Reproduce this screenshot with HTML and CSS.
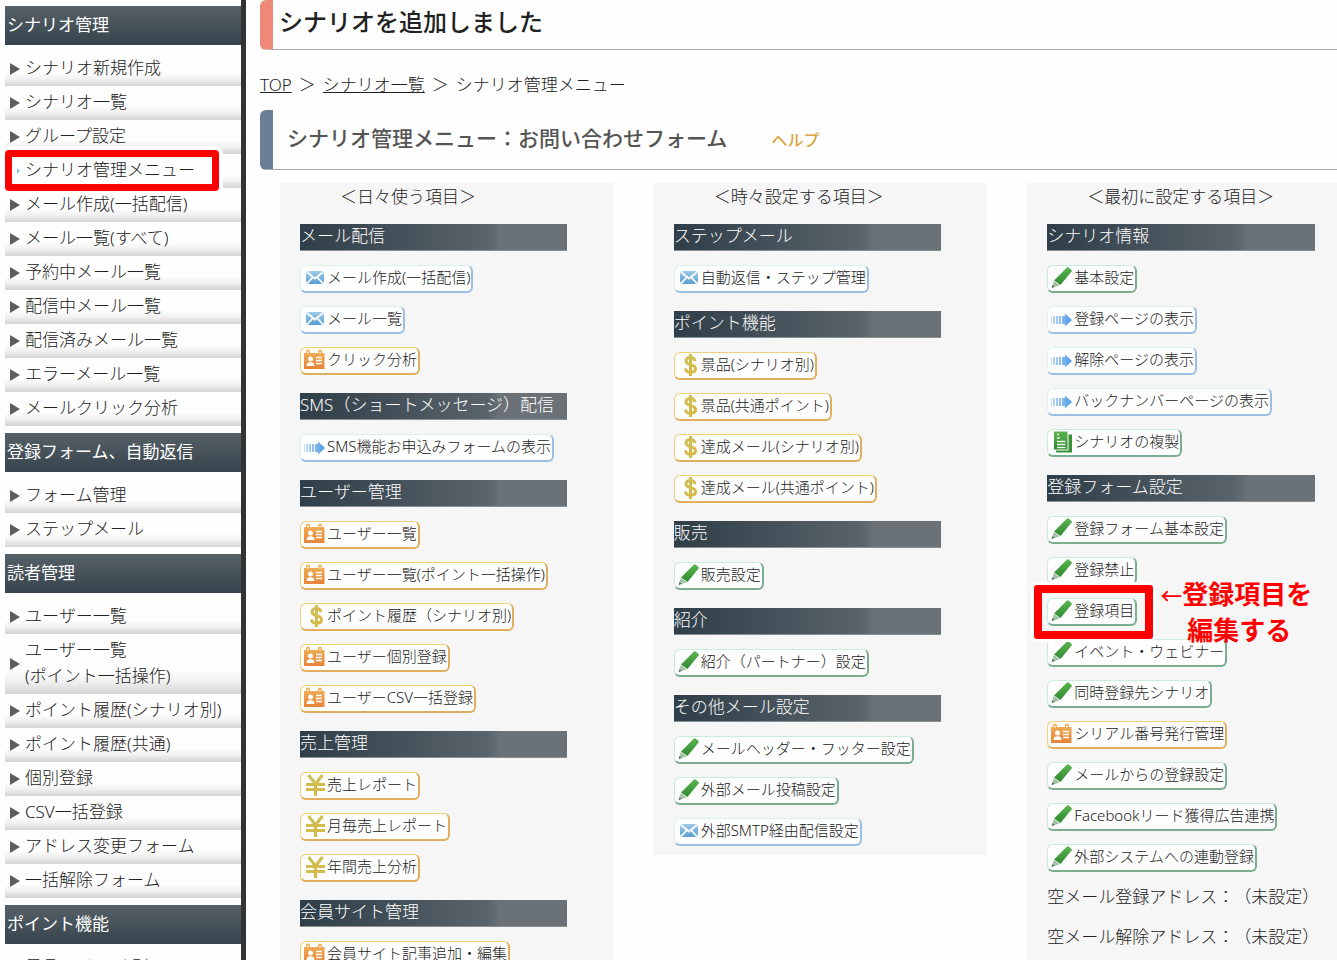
FILE: index.html
```html
<!DOCTYPE html>
<html lang="ja">
<head>
<meta charset="utf-8">
<title>シナリオ管理メニュー</title>
<link rel="stylesheet" href="styles.css">
</head>
<body>
<svg class="defs" width="0" height="0" aria-hidden="true">
  <defs>
    <linearGradient id="g-blue" x1="0" y1="0" x2="0" y2="1"><stop offset="0" stop-color="#9ccbe8"/><stop offset="1" stop-color="#5a9fd2"/></linearGradient>
    <linearGradient id="g-orange" x1="0" y1="0" x2="0" y2="1"><stop offset="0" stop-color="#efb458"/><stop offset="1" stop-color="#e8833a"/></linearGradient>
    <linearGradient id="g-green" x1="0" y1="0" x2="0" y2="1"><stop offset="0" stop-color="#5cb551"/><stop offset="1" stop-color="#2f8a30"/></linearGradient>
    <linearGradient id="g-arrow" x1="0" y1="0" x2="1" y2="0"><stop offset="0" stop-color="#c3ddf6"/><stop offset="1" stop-color="#4a98e6"/></linearGradient>
    <linearGradient id="g-gold" x1="0" y1="0" x2="1" y2="1"><stop offset="0" stop-color="#c9c25c"/><stop offset="1" stop-color="#dcb63f"/></linearGradient>
    <symbol id="mail" viewBox="0 0 22 24">
      <rect x="3" y="6" width="18" height="13" rx="4" fill="url(#g-blue)"/>
      <path d="M4.500 7.500l7.500 6 7.500-6M4.500 18l5-5.500M19.500 18l-5-5.500" fill="none" stroke="#fff" stroke-width="1.800"/>
    </symbol>
    <symbol id="card" viewBox="0 0 22 24">
      <path d="M1 6h2V4.500a2 2 0 0 1 4 0V6h8V4.500a2 2 0 0 1 4 0V6h2.500v16H1z" fill="url(#g-orange)"/>
      <path d="M4 4.500h2v2H4zM16 4.500h2v2h-2z" fill="#fbe3c0"/>
      <circle cx="7.500" cy="12" r="2.500" fill="#fff"/>
      <path d="M3.500 19c0-3 1.500-3.800 4-3.800s4 .8 4 3.800z" fill="#fff"/>
      <path d="M13 10.500h6M13 13.500h6M13 16.500h6" stroke="#fff" stroke-width="1.300"/>
    </symbol>
    <symbol id="arrow" viewBox="0 0 22 24">
      <path d="M1 10h1v8H1zM3 10h2v8H3zM6 10h2v8H6zM9 10h2v8H9zM12 10h3V7.500l7 6.500-7 6.500V18h-3z" fill="url(#g-arrow)"/>
    </symbol>
    <symbol id="pen" viewBox="0 0 22 24">
      <path d="M17 2.500q.7-.6 1.500 0l3 2.500q.7.700.1 1.500L10.500 20 4 15.500z" fill="url(#g-green)"/>
      <path d="M3.700 16l6 4.300-4 1.500-2.900-2.200z" fill="#a3bfa3"/>
      <path d="M2.500 19.700l2.800 2-3.800 1.600z" fill="#5a7a5c"/>
    </symbol>
    <symbol id="copy" viewBox="0 0 22 24">
      <path d="M4 2.500h13.500v18H4z" fill="url(#g-green)"/>
      <path d="M18.500 5.500H22v18H6v-2h12.500z" fill="#3b9338"/>
      <path d="M7 5.500h2M7 9h3M7 12.500h8.500M7 15.500h8.500M7 18.500h8.500" stroke="#e9f7e6" stroke-width="1.500"/>
    </symbol>
    <symbol id="dollar" viewBox="0 0 22 24">
      <path d="M18 9C17.500 6.700 16 5.500 13.500 5.500c-2.800 0-4.500 1.300-4.500 3.500 0 2.400 2 3 4.500 3.600s5 1.200 5 3.900c0 2.400-2 3.700-4.900 3.700-2.800 0-4.900-1.200-5.200-3.900M13.500 2v22" fill="none" stroke="url(#g-gold)" stroke-width="3"/>
    </symbol>
    <symbol id="yen" viewBox="0 0 22 24">
      <path d="M5.500 3L12.500 12 19.500 3M3 12.500h19M3 17.500h19M12.500 12v12" fill="none" stroke="url(#g-gold)" stroke-width="3"/>
    </symbol>
  </defs>
</svg>

<div class="page">
  <nav class="sidebar" aria-label="メニュー">
    <h2 class="side-head">シナリオ管理</h2>
    <ul class="side-list">
      <li><a href="#">シナリオ新規作成</a></li>
      <li><a href="#">シナリオ一覧</a></li>
      <li><a href="#">グループ設定</a></li>
      <li class="current"><a href="#" aria-current="page">シナリオ管理メニュー</a></li>
      <li><a href="#">メール作成(一括配信)</a></li>
      <li><a href="#">メール一覧(すべて)</a></li>
      <li><a href="#">予約中メール一覧</a></li>
      <li><a href="#">配信中メール一覧</a></li>
      <li><a href="#">配信済みメール一覧</a></li>
      <li><a href="#">エラーメール一覧</a></li>
      <li><a href="#">メールクリック分析</a></li>
    </ul>
    <h2 class="side-head">登録フォーム、自動返信</h2>
    <ul class="side-list">
      <li><a href="#">フォーム管理</a></li>
      <li><a href="#">ステップメール</a></li>
    </ul>
    <h2 class="side-head">読者管理</h2>
    <ul class="side-list">
      <li><a href="#">ユーザー一覧</a></li>
      <li><a href="#">ユーザー一覧<br>(ポイント一括操作)</a></li>
      <li><a href="#">ポイント履歴(シナリオ別)</a></li>
      <li><a href="#">ポイント履歴(共通)</a></li>
      <li><a href="#">個別登録</a></li>
      <li><a href="#">CSV一括登録</a></li>
      <li><a href="#">アドレス変更フォーム</a></li>
      <li><a href="#">一括解除フォーム</a></li>
    </ul>
    <h2 class="side-head">ポイント機能</h2>
    <ul class="side-list">
      <li><a href="#">景品(シナリオ別)</a></li>
    </ul>
  </nav>

  <main class="main">
    <h1 class="notice">シナリオを追加しました</h1>
    <nav class="crumbs" aria-label="パンくず"><a href="#">TOP</a><span>＞</span><a href="#">シナリオ一覧</a><span>＞</span><span>シナリオ管理メニュー</span></nav>
    <div class="title-bar">
      <h2 class="title">シナリオ管理メニュー：お問い合わせフォーム</h2>
      <a class="help" href="#">ヘルプ</a>
    </div>

    <div class="columns">
      <section class="panel">
        <p class="panel-title">＜日々使う項目＞</p>
        <h3 class="bar">メール配信</h3>
        <div class="group">
          <a class="btn blue" href="#"><svg class="icon"><use href="#mail"/></svg>メール作成(一括配信)</a>
          <a class="btn blue" href="#"><svg class="icon"><use href="#mail"/></svg>メール一覧</a>
          <a class="btn gold" href="#"><svg class="icon"><use href="#card"/></svg>クリック分析</a>
        </div>
        <h3 class="bar">SMS（ショートメッセージ）配信</h3>
        <div class="group">
          <a class="btn blue" href="#"><svg class="icon"><use href="#arrow"/></svg>SMS機能お申込みフォームの表示</a>
        </div>
        <h3 class="bar">ユーザー管理</h3>
        <div class="group">
          <a class="btn gold" href="#"><svg class="icon"><use href="#card"/></svg>ユーザー一覧</a>
          <a class="btn gold" href="#"><svg class="icon"><use href="#card"/></svg>ユーザー一覧(ポイント一括操作)</a>
          <a class="btn gold" href="#"><svg class="icon"><use href="#dollar"/></svg>ポイント履歴（シナリオ別)</a>
          <a class="btn gold" href="#"><svg class="icon"><use href="#card"/></svg>ユーザー個別登録</a>
          <a class="btn gold" href="#"><svg class="icon"><use href="#card"/></svg>ユーザーCSV一括登録</a>
        </div>
        <h3 class="bar">売上管理</h3>
        <div class="group">
          <a class="btn gold" href="#"><svg class="icon"><use href="#yen"/></svg>売上レポート</a>
          <a class="btn gold" href="#"><svg class="icon"><use href="#yen"/></svg>月毎売上レポート</a>
          <a class="btn gold" href="#"><svg class="icon"><use href="#yen"/></svg>年間売上分析</a>
        </div>
        <h3 class="bar">会員サイト管理</h3>
        <div class="group">
          <a class="btn gold" href="#"><svg class="icon"><use href="#card"/></svg>会員サイト記事追加・編集</a>
        </div>
      </section>

      <section class="panel panel-short">
        <p class="panel-title">＜時々設定する項目＞</p>
        <h3 class="bar">ステップメール</h3>
        <div class="group">
          <a class="btn blue" href="#"><svg class="icon"><use href="#mail"/></svg>自動返信・ステップ管理</a>
        </div>
        <h3 class="bar">ポイント機能</h3>
        <div class="group">
          <a class="btn gold" href="#"><svg class="icon"><use href="#dollar"/></svg>景品(シナリオ別)</a>
          <a class="btn gold" href="#"><svg class="icon"><use href="#dollar"/></svg>景品(共通ポイント)</a>
          <a class="btn gold" href="#"><svg class="icon"><use href="#dollar"/></svg>達成メール(シナリオ別)</a>
          <a class="btn gold" href="#"><svg class="icon"><use href="#dollar"/></svg>達成メール(共通ポイント)</a>
        </div>
        <h3 class="bar">販売</h3>
        <div class="group">
          <a class="btn green" href="#"><svg class="icon"><use href="#pen"/></svg>販売設定</a>
        </div>
        <h3 class="bar">紹介</h3>
        <div class="group">
          <a class="btn green" href="#"><svg class="icon"><use href="#pen"/></svg>紹介（パートナー）設定</a>
        </div>
        <h3 class="bar">その他メール設定</h3>
        <div class="group">
          <a class="btn green" href="#"><svg class="icon"><use href="#pen"/></svg>メールヘッダー・フッター設定</a>
          <a class="btn green" href="#"><svg class="icon"><use href="#pen"/></svg>外部メール投稿設定</a>
          <a class="btn blue" href="#"><svg class="icon"><use href="#mail"/></svg>外部SMTP経由配信設定</a>
        </div>
      </section>

      <section class="panel">
        <p class="panel-title">＜最初に設定する項目＞</p>
        <h3 class="bar">シナリオ情報</h3>
        <div class="group">
          <a class="btn green" href="#"><svg class="icon"><use href="#pen"/></svg>基本設定</a>
          <a class="btn blue" href="#"><svg class="icon"><use href="#arrow"/></svg>登録ページの表示</a>
          <a class="btn blue" href="#"><svg class="icon"><use href="#arrow"/></svg>解除ページの表示</a>
          <a class="btn blue" href="#"><svg class="icon"><use href="#arrow"/></svg>バックナンバーページの表示</a>
          <a class="btn green" href="#"><svg class="icon"><use href="#copy"/></svg>シナリオの複製</a>
        </div>
        <h3 class="bar">登録フォーム設定</h3>
        <div class="group group-form">
          <a class="btn green" href="#"><svg class="icon"><use href="#pen"/></svg>登録フォーム基本設定</a>
          <a class="btn green" href="#"><svg class="icon"><use href="#pen"/></svg>登録禁止</a>
          <div class="marked">
            <a class="btn green" href="#"><svg class="icon"><use href="#pen"/></svg>登録項目</a>
            <p class="callout"><span class="callout-arrow">←</span>登録項目を<br><span class="callout-next">編集する</span></p>
          </div>
          <a class="btn green" href="#"><svg class="icon"><use href="#pen"/></svg>イベント・ウェビナー</a>
          <a class="btn green" href="#"><svg class="icon"><use href="#pen"/></svg>同時登録先シナリオ</a>
          <a class="btn gold" href="#"><svg class="icon"><use href="#card"/></svg>シリアル番号発行管理</a>
          <a class="btn green" href="#"><svg class="icon"><use href="#pen"/></svg>メールからの登録設定</a>
          <a class="btn green" href="#"><svg class="icon"><use href="#pen"/></svg>Facebookリード獲得広告連携</a>
          <a class="btn green" href="#"><svg class="icon"><use href="#pen"/></svg>外部システムへの連動登録</a>
        </div>
        <p class="address">空メール登録アドレス：（未設定）</p>
        <p class="address">空メール解除アドレス：（未設定）</p>
      </section>
    </div>
  </main>
</div>
</body>
</html>
```

FILE: styles.css
```css
* { box-sizing: border-box; }

body {
  margin: 0;
  height: 100vh;
  overflow: hidden;
  background: #fefefe;
  color: #222;
  font-family: "Noto Sans", "Noto Sans CJK JP", sans-serif;
  font-size: 17px;
  font-weight: 300;
  line-height: 26px;
  text-spacing-trim: space-all;
}

h1, h2, h3, p, ul { margin: 0; padding: 0; }
ul { list-style: none; }
a { color: inherit; }
.defs { position: absolute; }

.page { display: flex; min-height: 100vh; }

/* Sidebar */
.sidebar {
  flex: none;
  width: 246px;
  padding: 6px 0 0 5px;
  border-right: 5px solid #333;
}

.side-head {
  padding: 6px 2px 7px;
  background: linear-gradient(#566067, #37444d);
  color: #fff;
  font-size: 17px;
  font-weight: 400;
}

.side-list { padding: 7px 0; }

.side-list li {
  position: relative;
  display: flex;
  align-items: center;
  padding: 3px 0 5px 5px;
  background: linear-gradient(#fefefe 60%, #f0f0f0 80%, #d4d4d4);
}

.side-list li::before {
  content: "";
  margin: 2px 5px 0 0;
  border-left: 10px solid #5e5e5e;
  border-top: 6px solid transparent;
  border-bottom: 6px solid transparent;
}

.side-list a { text-decoration: none; }

.side-list .current { z-index: 1; }

.side-list .current::before {
  z-index: 1;
  margin-left: 7px;
  border-left: 3px solid #8fc7e8;
  border-top: 3px solid transparent;
  border-bottom: 3px solid transparent;
}

.side-list .current a { z-index: 1; }

.side-list .current::after {
  content: "";
  position: absolute;
  inset: -4px 22px -3px 0;
  border: 7px solid #f00;
  border-radius: 4px;
  background: #fefefe;
  box-shadow: 0 0 0 4px #fefefe;
}

/* Main area */
.main {
  flex: 1;
  min-width: 0;
  padding-left: 14px;
  overflow: hidden;
}

.notice {
  padding: 6px 6px 11px;
  border-left: 13px solid #ef8977;
  border-bottom: 1px solid #aaa;
  border-radius: 6px 0 0 6px;
  font-size: 24px;
  font-weight: 500;
  line-height: 32px;
}

.crumbs {
  display: flex;
  gap: 7px;
  padding: 22px 0 12px;
}

.title-bar {
  display: flex;
  align-items: baseline;
  gap: 44px;
  padding: 12px 14px 15px;
  border-left: 13px solid #6c8095;
  border-bottom: 1px solid #aaa;
  border-radius: 6px 0 0 6px;
}

.title {
  color: #555;
  font-size: 21px;
  font-weight: 500;
  line-height: 32px;
}

.help {
  color: #d9a640;
  font-size: 16px;
  font-weight: 500;
  text-decoration: none;
}

.columns {
  display: grid;
  grid-template-columns: repeat(3, 1fr);
  gap: 40px;
  align-items: start;
  margin: 13px -24px 0 20px;
}

.panel {
  padding: 1px 20px 0;
  background: #f6f6f6;
}

.panel-title {
  margin-bottom: 14px;
  padding-left: 40px;
}

.bar {
  width: 91%;
  height: 27px;
  border-bottom: 1px solid #8a8f92;
  background: linear-gradient(90deg, #2f3e48, #59636b 70%, #6a7277 75%);
  color: #fff;
  font-size: 17px;
  font-weight: 300;
  line-height: 24px;
  white-space: nowrap;
}

.group {
  display: flex;
  flex-direction: column;
  align-items: flex-start;
  gap: 13px;
  padding: 14px 0 18px;
}

.panel-short .group:last-child { padding-bottom: 9px; }
.group-form { padding-bottom: 12px; }

.btn {
  display: flex;
  align-items: center;
  height: 28px;
  padding: 0 1px 3px 2px;
  border: 1px solid;
  border-right-width: 2px;
  border-bottom-width: 2px;
  border-radius: 6px;
  background: #fefefe;
  font-size: 15px;
  line-height: 24px;
  text-decoration: none;
  white-space: nowrap;
}

.blue { border-color: #dcf3ec #9bbfe4 #9bbfe4 #dcf3ec; }
.gold { border-color: #ecd07a #e0ae5c #e0ae5c #ecd07a; }
.green { border-color: #c9ecd9 #7aae8e #7aae8e #c9ecd9; }

.icon {
  flex: none;
  width: 22px;
  height: 24px;
  margin-right: 2px;
}

.marked { position: relative; z-index: 1; }

.marked::before {
  content: "";
  position: absolute;
  inset: -13px -16px -13px -13px;
  border: 8px solid #f00;
  border-radius: 3px;
  box-shadow: 0 0 0 3px #fefefe;
}

.callout {
  position: absolute;
  left: 113px;
  top: -21px;
  color: #f00;
  font-size: 26px;
  font-weight: 700;
  line-height: 35px;
  white-space: nowrap;
}

.callout-arrow { font-size: 22px; font-weight: 500; }

.callout-next { padding-left: 27px; }

.address {
  margin-bottom: 14px;
  white-space: nowrap;
}
```
